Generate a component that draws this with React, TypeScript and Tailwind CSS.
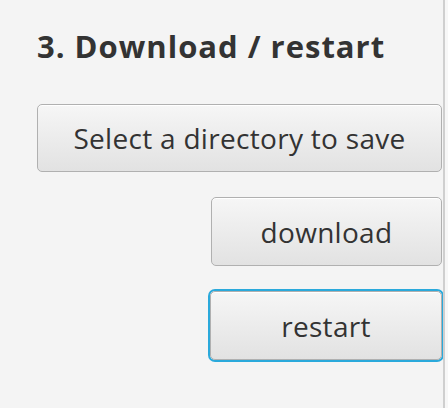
import React from "react";

const btn =
  "flex items-center justify-center rounded-[5px] border border-[#b0b0b0] bg-gradient-to-b from-[#f6f6f6] to-[#e2e2e2] text-[#333333] text-[28px] tracking-[0.3px] shadow-[inset_0_1px_0_#ffffff]";

export default function App() {
  return (
    <div
      className="flex h-[408px] w-[448px] bg-[#f4f4f4]"
      style={{ fontFamily: '"Open Sans", "Noto Sans", sans-serif' }}
    >
      <div className="flex w-[443px] flex-col pl-[37px] pr-[1px] pt-[24px]">
        <div className="h-[44px] text-[31px] font-bold leading-[44px] tracking-[1px] text-[#333333]">
          3. Download / restart
        </div>
        <div className="mt-[36px] flex flex-col items-end gap-[25px]">
          <button className={`${btn} h-[68px] w-full`}>Select a directory to save</button>
          <button className={`${btn} h-[69px] w-[231px]`}>download</button>
          <button
            className={`${btn} h-[69px] w-[232px] border-[#049fd5] ring-[2px] ring-[#2aa9db]`}
          >
            restart
          </button>
        </div>
      </div>
      <div className="w-[2px] bg-[#cfcfcf]" />
      <div className="flex-1 bg-[#f7f7f7]" />
    </div>
  );
}
